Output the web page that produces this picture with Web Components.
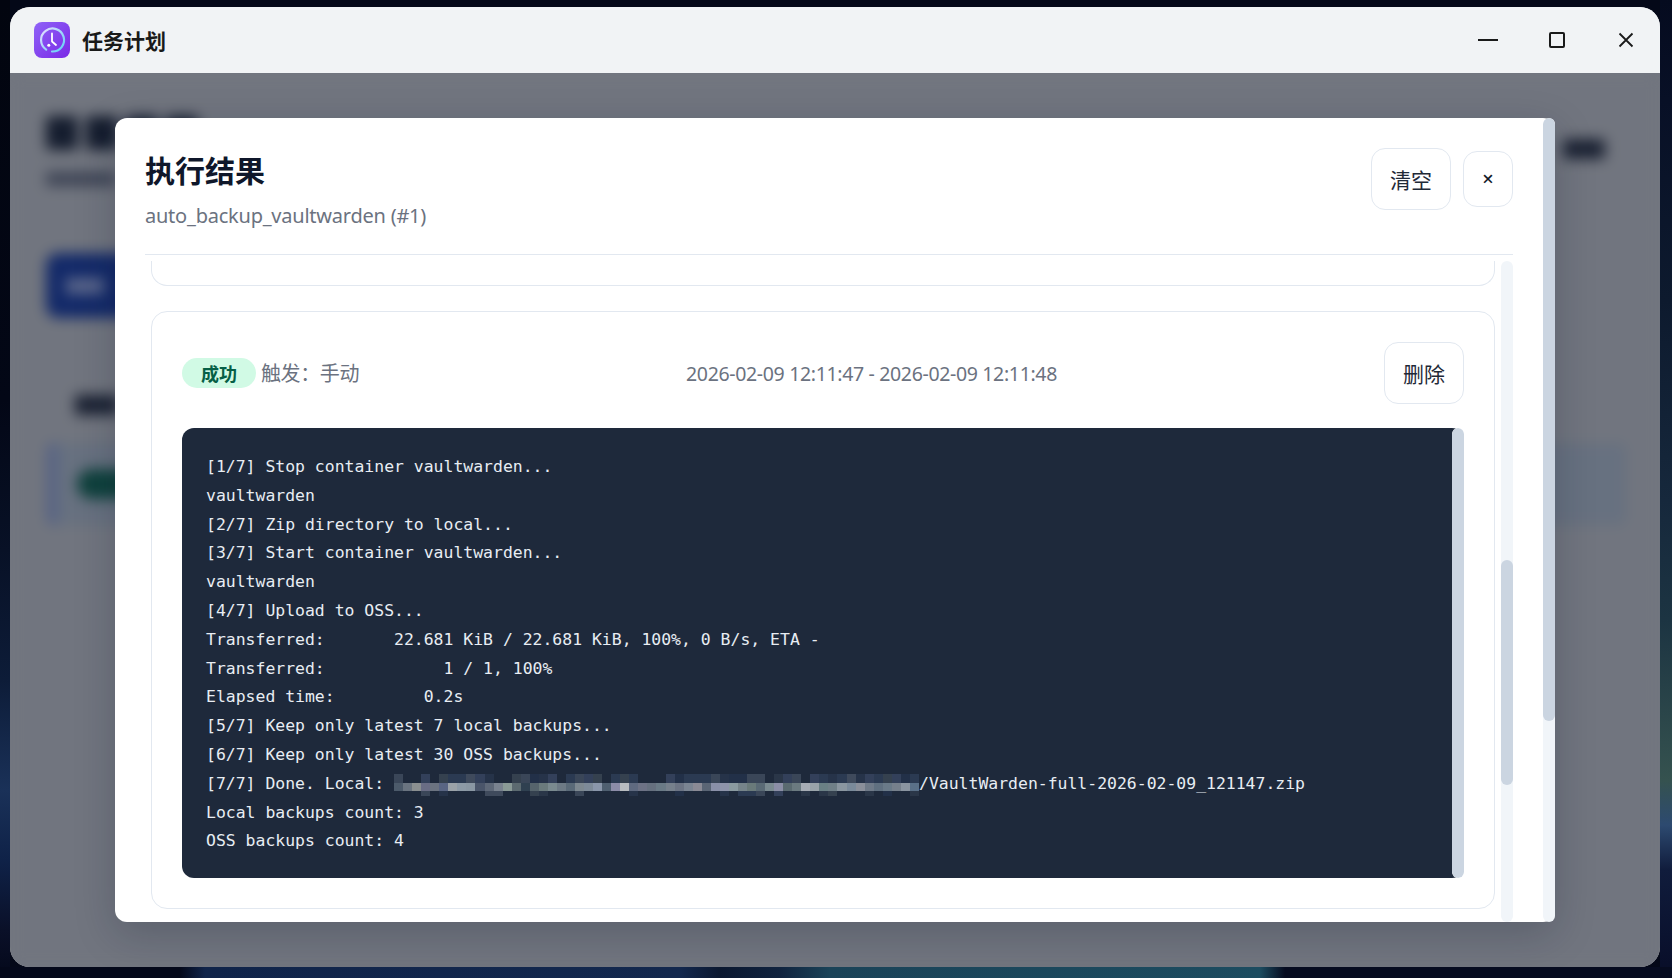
<!DOCTYPE html>
<html lang="zh-CN">
<head>
<meta charset="utf-8">
<title>任务计划</title>
<style>
html,body{margin:0;height:100%;overflow:hidden;background:#020617}
body{font-family:"Noto Sans","Noto Sans CJK SC",sans-serif}
</style>
</head>
<body>
<desk-top>
  <app-window>
    <title-bar>任务计划</title-bar>
    <task-page></task-page>
    <dim-layer></dim-layer>
    <result-modal>
      <span slot="title">执行结果</span>
      <span slot="sub">auto_backup_vaultwarden (#1)</span>
      <ui-btn slot="actions" kind="tall">清空</ui-btn>
      <ui-btn slot="actions" kind="close">×</ui-btn>
      <run-card stub></run-card>
      <run-card>
        <status-badge slot="head">成功</status-badge>
        <span slot="head">触发：手动</span>
        <span slot="time">2026-02-09 12:11:47 - 2026-02-09 12:11:48</span>
        <ui-btn slot="action" kind="tall">删除</ui-btn>
        <log-view>
          <div>[1/7] Stop container vaultwarden...</div>
          <div>vaultwarden</div>
          <div>[2/7] Zip directory to local...</div>
          <div>[3/7] Start container vaultwarden...</div>
          <div>vaultwarden</div>
          <div>[4/7] Upload to OSS...</div>
          <div>Transferred:       22.681 KiB / 22.681 KiB, 100%, 0 B/s, ETA -</div>
          <div>Transferred:            1 / 1, 100%</div>
          <div>Elapsed time:         0.2s</div>
          <div>[5/7] Keep only latest 7 local backups...</div>
          <div>[6/7] Keep only latest 30 OSS backups...</div>
          <div>[7/7] Done. Local: <redact-mosaic></redact-mosaic>/VaultWarden-full-2026-02-09_121147.zip</div>
          <div>Local backups count: 3</div>
          <div>OSS backups count: 4</div>
        </log-view>
      </run-card>
    </result-modal>
  </app-window>
</desk-top>
<script>
function def(name, html, extra){
  const t=document.createElement('template');
  t.innerHTML=html;
  customElements.define(name, class extends HTMLElement{
    constructor(){super();this.attachShadow({mode:'open'}).appendChild(t.content.cloneNode(true));}
    connectedCallback(){ if(extra) extra.call(this,this.shadowRoot); }
  });
}

def('desk-top',`<style>
:host{display:block;width:1672px;height:978px;box-sizing:border-box;padding:7px 12px 11px 10px;
background:
 linear-gradient(90deg,#04081a 0,#04081a 180px,#10244a 205px,#13284e 680px,#0b1830 720px,#10233f 780px,#1a4358 830px,#1c4c60 1260px,#060b20 1285px,#060b20 100%) 0 100%/100% 11px no-repeat,
 linear-gradient(180deg,#050b1f 0,#081026 100px,#0d1a2e 300px,#16283c 500px,#1c3442 620px,#35524f 780px,#2d4a70 825px,#101c3c 870px,#080d28 100%) 100% 0/12px 100% no-repeat,
 linear-gradient(180deg,#02050f 0,#030716 400px,#081126 550px,#0d1c38 680px,#1a3158 790px,#0f2248 860px,#0a1028 930px,#04081a 100%) 0 0/10px 100% no-repeat,
 #040818}
</style><slot></slot>`);

def('app-window',`<style>
:host{display:flex;flex-direction:column;position:relative;height:100%;border-radius:20px;overflow:hidden;background:#d3d3d4}
</style><slot></slot>`);

def('title-bar',`<style>
:host{display:flex;align-items:center;height:66px;flex:none;background:#f1f3f5;padding-left:24px;color:#1a1a1a;position:relative;z-index:2}
.t{font:700 21px/28px "Noto Sans CJK SC",sans-serif;margin-left:12px;flex:1;margin-top:-1px}
svg.logo{width:36px;height:36px;flex:none;display:block}
.c{display:flex;width:69px;height:100%;align-items:center;justify-content:center}
.c svg{display:block}
.ctrls{display:flex;height:100%;align-self:stretch}
</style>
<svg class="logo" viewBox="0 0 36 36">
  <defs>
    <linearGradient id="bg" x1="0" y1="0" x2="1" y2="1"><stop offset="0" stop-color="#8f63f7"/><stop offset="1" stop-color="#7a28e6"/></linearGradient>
    <linearGradient id="ring" x1="0" y1="0" x2="1" y2="1"><stop offset="0" stop-color="#e9ddff"/><stop offset="1" stop-color="#5fd0f5"/></linearGradient>
  </defs>
  <rect width="36" height="36" rx="8" fill="url(#bg)"/>
  <path d="M12.2 27.6A11.5 11.5 0 1 1 18 29.5" fill="none" stroke="url(#ring)" stroke-width="2.2" stroke-linecap="round"/>
  <path d="M18 11.5V19.5L22 23" fill="none" stroke="#fff" stroke-width="1.8" stroke-linecap="round" stroke-linejoin="round"/>
  <circle cx="14.8" cy="23.2" r="1.5" fill="#fff"/>
</svg>
<div class="t"><slot></slot></div>
<div class="ctrls">
  <div class="c"><svg width="20" height="20" viewBox="0 0 20 20"><path d="M0 10H20" stroke="#1a1a1a" stroke-width="2"/></svg></div>
  <div class="c"><svg width="16" height="16" viewBox="0 0 16 16"><rect x="1" y="1" width="14" height="14" rx="1" fill="none" stroke="#1a1a1a" stroke-width="2"/></svg></div>
  <div class="c"><svg width="16" height="16" viewBox="0 0 16 16"><path d="M1.5 1.5L14.5 14.5M14.5 1.5L1.5 14.5" stroke="#1a1a1a" stroke-width="1.8"/></svg></div>
</div>`);

def('task-page',`<style>
:host{display:block;flex:1;min-height:0;filter:blur(7px);box-sizing:border-box;padding:43px 33px 0 36px;background:#d3d3d4}
.top{display:flex;justify-content:space-between;height:72px}
.h{display:flex;gap:8px}
.g{width:32px;height:34px;background:#1a2233;border-radius:4px}
.sub{width:70px;height:14px;background:#6b7080;margin-top:22px;border-radius:2px}
.r{width:42px;height:20px;background:#262c3c;margin:23px 22px 0 0;border-radius:3px}
.new{width:120px;height:65px;background:#163ba8;border-radius:12px;margin-top:65px;display:flex;align-items:center;padding-left:20px;box-sizing:border-box}
.new i{width:38px;height:16px;background:#a8b8ee;display:block}
.tbl{margin-top:48px;height:170px;border:1px solid #cfd0d2;border-radius:12px;box-sizing:border-box}
.th{height:76px;display:flex;align-items:center;padding-left:28px}
.th i{width:44px;height:20px;background:#262c3c;display:block}
.row{height:82px;background:#bfcad6;display:flex;align-items:center;padding-left:20px;border-left:10px solid #9aabe0;border-radius:6px}
.pill{width:90px;height:30px;background:#0e6a50;border-radius:15px}
</style>
<div class="top">
  <div><div class="h"><div class="g"></div><div class="g"></div><div class="g"></div><div class="g"></div></div><div class="sub"></div></div>
  <div class="r"></div>
</div>
<div class="new"><i></i></div>
<div class="tbl">
  <div class="th"><i></i></div>
  <div class="row"><div class="pill"></div></div>
</div>`);

def('dim-layer',`<style>:host{position:absolute;inset:66px 0 0 0;background:rgba(15,23,42,.5);display:block;z-index:1}</style>`);

def('scroll-bar',`<style>
:host{display:flex;flex-direction:column;width:12px;flex:none;background:#f1f5f9;border-radius:6px;overflow:hidden}
.thumb{background:#cbd5e1;border-radius:6px}
</style><div class="b"></div><div class="thumb"></div>`,function(r){
  r.querySelector('.b').style.height=(this.getAttribute('top')||0)+'px';
  r.querySelector('.thumb').style.height=(this.getAttribute('thumb')||0)+'px';
});

def('result-modal',`<style>
:host{position:absolute;left:105px;top:111px;width:1440px;height:804px;display:flex;background:#fff;border-radius:12px;box-shadow:0 12px 40px rgba(15,23,42,.22);z-index:1}
.main{flex:1;min-width:0;display:flex;flex-direction:column;padding:0 30px}
header{display:flex;justify-content:space-between;align-items:flex-start;box-sizing:border-box;height:137px;padding-top:30px;border-bottom:1px solid #e2e8f0;flex:none}
h2{margin:0;font:700 30px/42px "Noto Sans CJK SC",sans-serif;color:#0f172a}
.sub{font:400 20px/30px "Noto Sans","Noto Sans CJK SC",sans-serif;color:#6b7280;margin-top:11px;letter-spacing:-.23px}
.acts{display:flex;align-items:center;gap:12px}
.list{flex:1;min-height:0;display:flex;margin-top:6px;overflow:hidden}
.cards{flex:1;min-width:0;padding:0 6px;display:flex;flex-direction:column;gap:25px}
</style>
<div class="main">
  <header>
    <div><h2><slot name="title"></slot></h2><div class="sub"><slot name="sub"></slot></div></div>
    <div class="acts"><slot name="actions"></slot></div>
  </header>
  <div class="list">
    <div class="cards"><slot></slot></div>
    <scroll-bar top="299" thumb="225"></scroll-bar>
  </div>
</div>
<scroll-bar thumb="603"></scroll-bar>`);

def('ui-btn',`<style>
:host{display:inline-flex;align-items:center;justify-content:center;box-sizing:border-box;background:#fff;border:1px solid #e2e8f0;border-radius:14px;color:#1f2937;font:400 21px/28px "Noto Sans CJK SC",sans-serif}
:host([kind=tall]){width:80px;height:62px}
:host([kind=close]){width:50px;height:56px;font:500 20px/28px "Noto Sans",sans-serif;color:#111827}
</style><slot></slot>`);

def('status-badge',`<style>
:host{display:inline-flex;align-items:center;justify-content:center;width:74px;height:30px;border-radius:15px;background:#d1fae5;color:#065f46;font:700 18px/30px "Noto Sans CJK SC",sans-serif}
</style><slot></slot>`);

def('run-card',`<style>
:host{display:block;box-sizing:border-box;background:#fff;border:1px solid #e2e8f0;border-radius:16px;padding:30px}
:host([stub]){height:25px;padding:0;border-top:0;border-radius:0 0 16px 16px;flex:none}
.head{display:flex;align-items:center;justify-content:space-between;height:62px;margin-bottom:24px;color:#6b7280;font:400 20px/28px "Noto Sans","Noto Sans CJK SC",sans-serif}
.l{display:flex;align-items:center;gap:5px}
.l ::slotted(span){letter-spacing:-.4px;padding-top:1px}
.tm{font-size:19.5px;letter-spacing:-.34px;padding-top:2px}
</style>
<div class="head">
  <div class="l"><slot name="head"></slot></div>
  <div class="tm"><slot name="time"></slot></div>
  <slot name="action"></slot>
</div>
<slot></slot>`,function(r){ if(this.hasAttribute('stub')) r.querySelector('.head').style.display='none'; });

def('log-view',`<style>
:host{display:flex;height:450px;background:#1e293b;border-radius:12px;color:#e8edf3}
.pre{flex:1;min-width:0;box-sizing:border-box;padding:25px 24px 0;font:400 16.45px/28.8px "DejaVu Sans Mono",monospace}
::slotted(div){white-space:pre;height:28.8px}
</style><div class="pre"><slot></slot></div><scroll-bar thumb="450"></scroll-bar>`);

const mid="4c5a6a 6a7480 8a8f90 6a6d85 6b7380 596583 9ba2a8 8d9aa6 8a97a3 4a556a 5e6878 79828f 8a9a96 5c6a70 2f4050 56646c 6a7a7c 7a8a8f 6d7a85 5a6a78 7d8890 7d8a98 8a96aa 4f5f70 8c8ca8 b8bcc0 5f6a80 6d7285 66707f 6a7a86 76808c 6c7484 7a8492 8a8a95 5a6575 8a90a8 8e94aa 8a9aa0 76848a 6a7a7a 5a6a75 7a8a90 8b8ea6 5a6a70 6b7a80 a6acb4 9aa4aa 6a8085 708088 8a96a0 7a8a9a 8a8f9a 6f7a88 607080 6a7a88 76808c 8a94a0 5a7088".split(' ');
const dimC=['#1e293b','#263349','#2b3a52','#33405a','#3a4658','#2a3648','#1e293b','#3f4a5c','#223048','#1e293b','#35414f'];
def('redact-mosaic',`<style>
:host{display:inline-block;width:525px;height:22px;vertical-align:-7px}
svg{display:block}
</style><svg width="525" height="22" viewBox="0 0 525 22" shape-rendering="crispEdges"></svg>`,function(r){
  const svg=r.querySelector('svg');let s='',seed=7;
  const rnd=()=>{seed=(seed*16807)%2147483647;return seed;};
  const w=9.05;
  mid.forEach((c,i)=>{
    s+=`<rect x="${i*w}" y="0" width="${w+.5}" height="9" fill="${dimC[rnd()%dimC.length]}"/>`;
    s+=`<rect x="${i*w}" y="9" width="${w+.5}" height="8" fill="#${c}"/>`;
    s+=`<rect x="${i*w}" y="17" width="${w+.5}" height="5" fill="${rnd()%2?'#1e293b':dimC[rnd()%dimC.length]}"/>`;
  });
  svg.innerHTML=s;
});
</script>
</body>
</html>
